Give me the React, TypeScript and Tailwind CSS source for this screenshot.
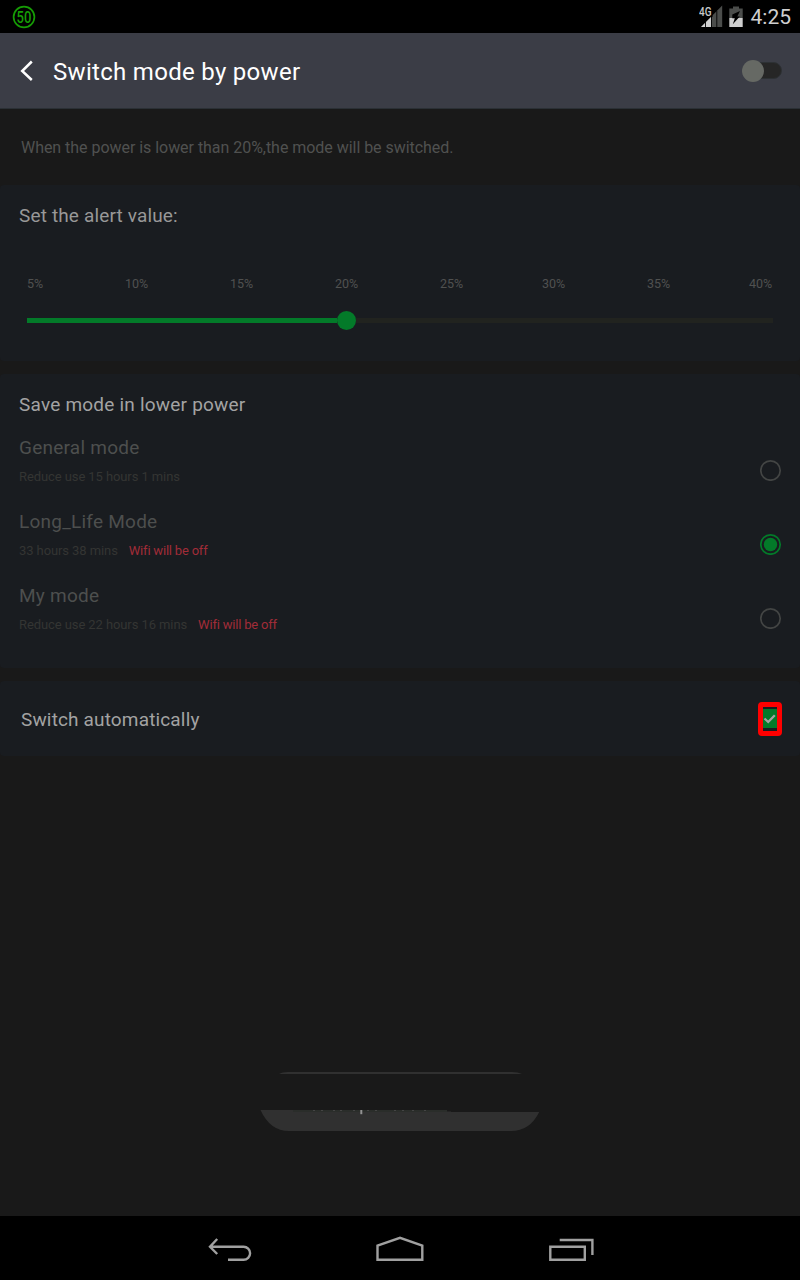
import React from "react";

const percents = ["5%", "10%", "15%", "20%", "25%", "30%", "35%", "40%"];

type Mode = { name: string; detail: string; warning?: string; selected?: boolean };

const modes: Mode[] = [
  { name: "General mode", detail: "Reduce use 15 hours 1 mins" },
  { name: "Long_Life Mode", detail: "33 hours 38 mins", warning: "Wifi will be off", selected: true },
  { name: "My mode", detail: "Reduce use 22 hours 16 mins", warning: "Wifi will be off" },
];

function StatusBar() {
  return (
    <div className="flex h-[33px] shrink-0 items-center justify-between bg-black pl-3 pr-[9px]">
      <svg width="24" height="24" viewBox="0 0 24 24">
        <circle cx="12" cy="12" r="10.4" fill="none" stroke="#169c05" strokeWidth="1.7" />
        <text x="4.6" y="17.8" fontFamily="Roboto, sans-serif" fontSize="16" fontWeight="500" fill="#169c05" textLength="14.8" lengthAdjust="spacingAndGlyphs">50</text>
      </svg>
      <div className="flex items-center">
        <svg className="mr-[5px]" width="25" height="24" viewBox="0 0 25 24">
          <path d="M23.2 0.5V22H2Z" fill="#4b4d4b" />
          <path d="M12 12V22H2Z" fill="#d0d0d0" />
          <path d="M6.5 17V22M12.5 12V22M17.8 6V22" stroke="#000" strokeWidth="0.9" />
          <rect x="0" y="0" width="13.5" height="12" fill="#000" />
          <text x="0" y="11" fontFamily="Roboto, sans-serif" fontSize="12.5" fontWeight="500" fill="#c8c8c8" textLength="12.5" lengthAdjust="spacingAndGlyphs">4G</text>
        </svg>
        <svg className="mr-2" width="14" height="22" viewBox="0 0 14 22">
          <path d="M4 0.5H10V2.5H13.7V12H0.3V2.5H4Z" fill="#4b4d4b" />
          <path d="M0.3 12H13.7V21H0.3Z" fill="#cfcfcf" />
          <path d="M11 5L3.3 8.5V12.2H5.8L3.8 18.3L10.8 10.5H8.3Z" fill="#000" />
        </svg>
        <span className="mt-[2px] text-[21px] leading-none text-[#cfcfcf]">4:25</span>
      </div>
    </div>
  );
}

function Header() {
  return (
    <header className="flex h-[76px] shrink-0 items-center border-b border-[#2b3035] bg-[#3b3d46] pl-5 pr-[18px]">
      <svg width="14" height="22" viewBox="0 0 14 22" className="mr-[19px]" fill="none" stroke="#fff" strokeWidth="2.5">
        <path d="M11.8 1.5L2.2 11L11.8 20" />
      </svg>
      <h1 className="mt-[2px] text-[24px] leading-7 tracking-[0.3px] text-white">Switch mode by power</h1>
      <div className="relative ml-auto h-[17px] w-10 rounded-full border border-[#2d3134] bg-[#262626]">
        <div className="absolute -left-[1.5px] -top-[3.5px] h-[22px] w-[22px] rounded-full bg-[#666964]" />
      </div>
    </header>
  );
}

function AlertSlider() {
  return (
    <section className="h-44 shrink-0 rounded bg-[#191c20] px-[27px] pt-[18px]">
      <h2 className="-ml-2 text-[19px] leading-[26px] tracking-[0.15px] text-[#989898]">Set the alert value:</h2>
      <div className="mt-[47px] grid grid-cols-[98px_105px_105px_105px_102px_105px_102px_auto] text-[12.5px] leading-4 text-[#505150]">
        {percents.map((p) => (
          <span key={p}>{p}</span>
        ))}
      </div>
      <div className="mt-[19px] flex h-[19px] items-center">
        <div className="h-[5px] w-[310px] bg-[#037a29]" />
        <div className="h-[19px] w-[19px] rounded-full bg-[#037a29]" />
        <div className="h-[5px] flex-1 bg-[#21231f]" />
      </div>
    </section>
  );
}

function ModeRow({ mode }: { mode: Mode }) {
  return (
    <div className="flex h-[74px] items-start justify-between">
      <div>
        <div className="text-[19px] leading-[26px] tracking-[0.24px] text-[#4d4f4e]">{mode.name}</div>
        <div className="mt-2 flex gap-[11px] text-[13px] leading-4">
          <span className="tracking-[-0.09px] text-[#343533]">{mode.detail}</span>
          {mode.warning && <span className="tracking-[-0.2px] text-[#a12c38]">{mode.warning}</span>}
        </div>
      </div>
      <svg className="mt-[24px]" width="22" height="22" viewBox="0 0 22 22">
        <circle cx="10.5" cy="11.5" r="9.7" fill="none" strokeWidth="1.7" stroke={mode.selected ? "#037a29" : "#434544"} />
        {mode.selected && <circle cx="10.5" cy="11.5" r="6.7" fill="#037a29" />}
      </svg>
    </div>
  );
}

function ModeList() {
  return (
    <section className="mt-[13px] h-[294px] shrink-0 rounded bg-[#191c20] pl-[19px] pr-[18px] pt-[18px]">
      <h2 className="mb-[17px] text-[19px] leading-[26px] tracking-[0.21px] text-[#a3a3a3]">Save mode in lower power</h2>
      {modes.map((m) => (
        <ModeRow key={m.name} mode={m} />
      ))}
    </section>
  );
}

function AutoSwitch() {
  return (
    <section className="mt-[13px] flex h-[75px] shrink-0 items-center justify-between rounded bg-[#191c20] pl-[21px] pr-[18px]">
      <h2 className="mt-[2px] text-[19px] leading-[26px] tracking-[0.15px] text-[#a3a3a3]">Switch automatically</h2>
      <div className="flex h-[34px] w-6 items-center justify-center rounded-[4px] border-[5px] border-[#ff0000]">
        <svg width="14" height="19" viewBox="0 0 14 19">
          <rect width="14" height="19" fill="#037a29" />
          <path d="M1.5 9.5L5.2 13L11.8 6.3" fill="none" stroke="#a3a3a3" strokeWidth="2.3" />
        </svg>
      </div>
    </section>
  );
}

function Toast() {
  return (
    <svg className="absolute left-[260px] top-[1072px]" width="280" height="60" viewBox="0 0 280 60">
      <path d="M19 2Q22 0 28 0H252Q258 0 262 2Z" fill="#303030" />
      <path d="M0.5 38H187V39.5H191V40H279.2Q270 59 251 59H29Q10 59 0.5 38Z" fill="#303030" />
      <path d="M33 39H187" stroke="#2a2d2a" strokeWidth="2" />
      <path d="M53 38.5h2M61 38.5h2M73 38.5h2M80 38.5h2M93 38.5h2M107 38.5h2M115 38.5h2M134 38.5h2M142 38.5h2M152 38.5h2M164 38.5h2" stroke="#444" />
      <path d="M101.3 38V42.2" stroke="#929292" strokeWidth="2" />
    </svg>
  );
}

function NavBar() {
  return (
    <nav className="flex h-16 shrink-0 items-center bg-black pl-[207px] pt-1">
      <svg width="46" height="28" viewBox="0 0 46 28" fill="none" stroke="#a0a0a0" strokeWidth="2.4">
        <path d="M10.2 3L3 10.8L10.2 18M3 10.8H36.6A6.5 6.5 0 0 1 36.6 23.8H21" />
      </svg>
      <svg className="ml-[122px]" width="50" height="28" viewBox="0 0 50 28" fill="none" stroke="#a0a0a0" strokeWidth="2.4">
        <path d="M2.5 23.8V9.5L25 1.8L47.3 9.5V23.8Z" />
      </svg>
      <svg className="ml-[123px]" width="48" height="28" viewBox="0 0 48 28" fill="none" stroke="#a0a0a0" strokeWidth="2.4">
        <path d="M2.3 10.7H36.8V23.8H2.3ZM11.7 4H44.4V19" />
      </svg>
    </nav>
  );
}

export default function App() {
  return (
    <div className="relative flex h-[1280px] w-[800px] flex-col overflow-hidden bg-[#191919] font-[Roboto,sans-serif]">
      <StatusBar />
      <Header />
      <p className="h-[76px] shrink-0 pl-[21px] pt-[28px] text-[16px] leading-[22px] tracking-[-0.04px] text-[#505150]">
        When the power is lower than 20%,the mode will be switched.
      </p>
      <AlertSlider />
      <ModeList />
      <AutoSwitch />
      <div className="flex-1" />
      <Toast />
      <NavBar />
    </div>
  );
}
